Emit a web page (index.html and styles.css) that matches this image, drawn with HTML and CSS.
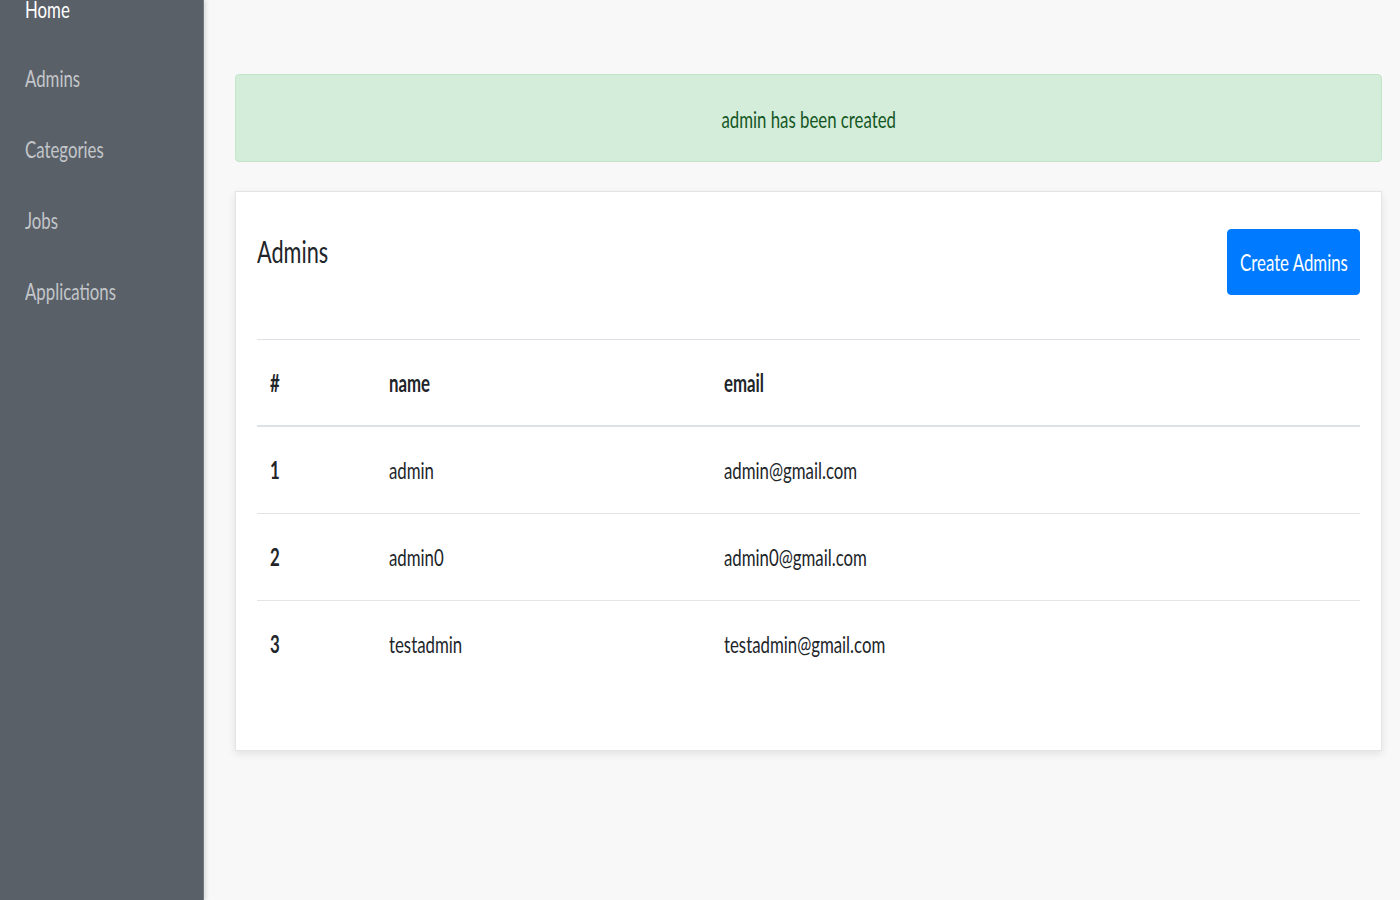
FILE: index.html
```html
<!DOCTYPE html>
<html lang="en">
<head>
<meta charset="utf-8">
<title>Admins</title>
<link rel="stylesheet" href="styles.css">
</head>
<body>
<div class="layout">
  <aside class="sidebar">
    <ul class="nav">
      <li class="nav-item active"><a href="#"><span class="sq">Home</span></a></li>
      <li class="nav-item"><a href="#"><span class="sq">Admins</span></a></li>
      <li class="nav-item"><a href="#"><span class="sq">Categories</span></a></li>
      <li class="nav-item"><a href="#"><span class="sq">Jobs</span></a></li>
      <li class="nav-item"><a href="#"><span class="sq">Applications</span></a></li>
    </ul>
  </aside>
  <main class="main">
    <div class="alert"><span class="sq sq-c">admin has been created</span></div>
    <section class="card">
      <div class="card-head">
        <h2 class="title"><span class="sq">Admins</span></h2>
        <button class="btn" type="button"><span class="sq sq-c">Create Admins</span></button>
      </div>
      <table class="table">
        <colgroup>
          <col class="c-num">
          <col class="c-name">
          <col class="c-email">
        </colgroup>
        <thead>
          <tr><th><span class="sq">#</span></th><th><span class="sq">name</span></th><th><span class="sq">email</span></th></tr>
        </thead>
        <tbody>
          <tr><th><span class="sq">1</span></th><td><span class="sq">admin</span></td><td><span class="sq">admin@gmail.com</span></td></tr>
          <tr><th><span class="sq">2</span></th><td><span class="sq">admin0</span></td><td><span class="sq">admin0@gmail.com</span></td></tr>
          <tr><th><span class="sq">3</span></th><td><span class="sq">testadmin</span></td><td><span class="sq">testadmin@gmail.com</span></td></tr>
        </tbody>
      </table>
    </section>
  </main>
</div>
</body>
</html>
```
FILE: styles.css
```css
* { box-sizing: border-box; }

html, body {
  margin: 0;
  padding: 0;
  height: 100%;
}

body {
  font-family: Lato, "Open Sans", "Liberation Sans", sans-serif;
  font-size: 24px;
  line-height: 1.5;
  color: #212529;
  background: #f8f8f8;
  overflow: hidden;
}

.sq {
  display: inline-block;
  white-space: nowrap;
  transform: scaleX(0.7);
  transform-origin: left center;
}

.sq-c { transform-origin: center center; }

.layout {
  display: flex;
  min-height: 100vh;
}

.sidebar {
  width: 204px;
  flex: 0 0 204px;
  background: #5a6068;
  border-right: 1px solid #737980;
  box-shadow: 2px 0 4px rgba(0, 0, 0, 0.12);
  overflow: hidden;
}

.nav {
  list-style: none;
  margin: -28px 0 0;
  padding: 0;
}

.nav-item a {
  display: flex;
  align-items: center;
  height: 71px;
  padding-left: 25px;
  color: #c3c6ca;
  text-decoration: none;
}

.nav-item:first-child a { padding-top: 2px; }

.nav-item:nth-child(2) a { margin-top: -1px; }

.nav-item.active a { color: #ffffff; }

.main {
  flex: 1;
  padding: 74px 18px 0 31px;
}

.alert {
  display: flex;
  justify-content: center;
  align-items: center;
  height: 88px;
  padding-top: 1px;
  background: #d4edda;
  border: 1px solid #c3e6cb;
  border-radius: 4px;
  color: #155724;
}

.card {
  margin-top: 29px;
  background: #ffffff;
  border: 1px solid #e4e4e4;
  box-shadow: 0 3px 8px rgba(0, 0, 0, 0.09);
  padding: 37px 21px 63px;
}

.card-head {
  display: flex;
  justify-content: space-between;
  align-items: flex-start;
  margin-bottom: 44px;
}

.title {
  margin: 4px 0 0;
  font-size: 31px;
  font-weight: 400;
  line-height: 36px;
}

.btn {
  display: flex;
  justify-content: center;
  align-items: center;
  width: 133px;
  height: 66px;
  padding: 0;
  border: 1px solid #007bff;
  border-radius: 4px;
  background: #007bff;
  color: #ffffff;
  font: inherit;
  cursor: pointer;
}

.table {
  width: 100%;
  border-collapse: collapse;
  table-layout: fixed;
}

.c-num { width: 119px; }
.c-name { width: 335px; }

.table th,
.table td {
  text-align: left;
  line-height: 36px;
  padding: 25px 13px;
  border-top: 1px solid #e2e5e8;
  vertical-align: middle;
}

.table th { font-weight: 700; }

.table thead th {
  padding: 25px 13px 24px;
  border-top: 1px solid #dee2e6;
  border-bottom: 2px solid #dee2e6;
}

.table tbody tr:first-child th,
.table tbody tr:first-child td { border-top: 0; }

.table td { font-weight: 400; }
```
